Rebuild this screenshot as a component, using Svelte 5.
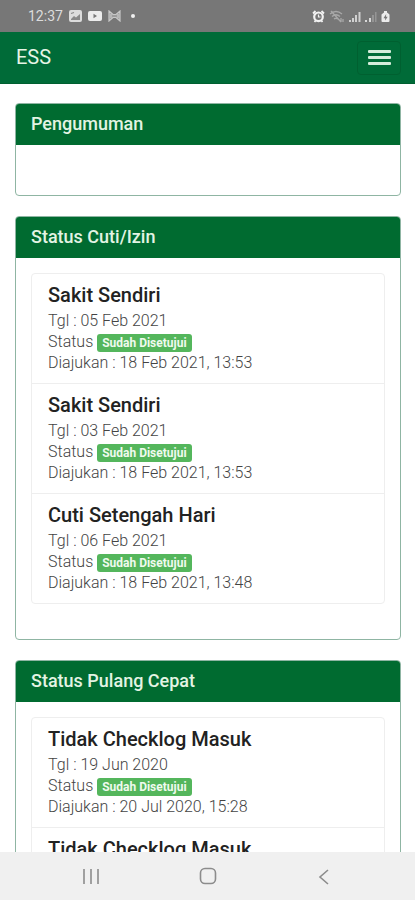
<script lang="ts">
	interface Pengajuan {
		judul: string;
		tgl?: string;
		status?: string;
		diajukan?: string;
	}

	interface Panel {
		judul: string;
		items: Pengajuan[];
	}

	const panels: Panel[] = [
		{ judul: 'Pengumuman', items: [] },
		{
			judul: 'Status Cuti/Izin',
			items: [
				{ judul: 'Sakit Sendiri', tgl: '05 Feb 2021', status: 'Sudah Disetujui', diajukan: '18 Feb 2021, 13:53' },
				{ judul: 'Sakit Sendiri', tgl: '03 Feb 2021', status: 'Sudah Disetujui', diajukan: '18 Feb 2021, 13:53' },
				{ judul: 'Cuti Setengah Hari', tgl: '06 Feb 2021', status: 'Sudah Disetujui', diajukan: '18 Feb 2021, 13:48' }
			]
		},
		{
			judul: 'Status Pulang Cepat',
			items: [
				{ judul: 'Tidak Checklog Masuk', tgl: '19 Jun 2020', status: 'Sudah Disetujui', diajukan: '20 Jul 2020, 15:28' },
				{ judul: 'Tidak Checklog Masuk' }
			]
		}
	];
</script>

<div class="screen">
	<!-- Status bar -->
	<div class="status-bar">
		<div class="status-group">
			<span class="clock">12:37</span>
			<svg width="13" height="12" viewBox="0 0 13 12">
				<rect width="13" height="12" rx="2" fill="#dcdcdc" />
				<path d="M2 9l3-3 2 1.500 4-3.500V10H2z" fill="#888" />
				<path d="M2 3.500l3-1" fill="none" stroke="#888" stroke-width="1.300" />
			</svg>
			<svg width="14" height="12" viewBox="0 0 14 12">
				<rect y="1" width="14" height="10" rx="2" fill="#ececec" />
				<path d="M5.500 3.800v4.400L9 6z" fill="#777" />
			</svg>
			<svg width="13" height="12" viewBox="0 0 13 12" fill="#9c9c9c" stroke="#c8c8c8" stroke-width="1.200">
				<path d="M1 1l4 3.500h3L12 1v10L8 7.500H5L1 11z" />
				<path d="M3 4v4M10 4v4" />
			</svg>
			<span class="dot"></span>
		</div>
		<div class="status-group right">
			<svg width="13" height="13" viewBox="0 0 13 13" fill="none" stroke="#f2f2f2">
				<circle cx="6.500" cy="6.800" r="4.300" stroke-width="2.200" />
				<path d="M6.500 4.500v2.500h2" stroke-width="1.200" />
				<path d="M1 3.500L3.500 1M12 3.500L9.500 1M2.500 12l1.200-1.500M10.500 12l-1.200-1.500" stroke-width="1.800" />
			</svg>
			<svg width="16" height="13" viewBox="0 0 16 13" fill="none" stroke="#a8a8a8" stroke-width="1.300">
				<path d="M1 4q6-5 12 0M3 6.500q4-3.500 8 0M5 9q2-1.500 4 0M2 1l10 11M12 8v4M14 9v3" />
			</svg>
			<svg width="12" height="13" viewBox="0 0 12 13" fill="#d0d0d0">
				<path d="M0 10h2v2H0zM3 8h2v4H3zM6 5h2v7H6zM9.500 2h2v10h-2z" />
			</svg>
			<svg width="12" height="13" viewBox="0 0 12 13">
				<path d="M0 10h2v2H0zM4 8h2v4H4z" fill="#d8d8d8" />
				<path d="M7 5h2v7H7zM10 2h1.500v10H10z" fill="#959595" />
			</svg>
			<svg width="9" height="13" viewBox="0 0 9 13">
				<path d="M3 1h3v1.500l2 1.500a1 1 0 0 1 .500 1V11a1 1 0 0 1-1 1h-6a1 1 0 0 1-1-1V5a1 1 0 0 1 .500-1l2-1.500z" fill="#ececec" />
				<path d="M5.200 4L2.500 8.200h1.700v2.300L6.700 6.700H5z" fill="#777" />
			</svg>
		</div>
	</div>

	<!-- Navbar -->
	<header class="navbar">
		<a class="brand" href="/">ESS</a>
		<button class="toggle" type="button" aria-label="Menu">
			<span class="bar"></span>
			<span class="bar"></span>
			<span class="bar"></span>
		</button>
	</header>

	<main class="content">
		{#each panels as panel}
			<section class="panel">
				<h2 class="panel-heading">{panel.judul}</h2>
				<div class="panel-body">
					{#if panel.items.length}
						<ul class="list">
							{#each panel.items as item}
								<li class="list-item">
									<h3 class="item-title">{item.judul}</h3>
									{#if item.tgl}
										<div>Tgl : {item.tgl}</div>
										<div>Status <span class="label">{item.status}</span></div>
										<div>Diajukan : {item.diajukan}</div>
									{/if}
								</li>
							{/each}
						</ul>
					{/if}
				</div>
			</section>
		{/each}
	</main>

	<!-- Android navigation -->
	<nav class="bottom-nav">
		<button type="button" aria-label="Recent apps">
			<svg width="18" height="18" viewBox="0 0 18 18" fill="none" stroke="#a0a0a0" stroke-width="2">
				<path d="M2 2v15M9 2v15M16 2v15" />
			</svg>
		</button>
		<button type="button" aria-label="Home">
			<svg width="18" height="18" viewBox="0 0 18 18" fill="none" stroke="#8c8c8c" stroke-width="1.600">
				<rect x="1.500" y="1.500" width="15" height="15" rx="4.500" />
			</svg>
		</button>
		<button type="button" aria-label="Back">
			<svg width="18" height="18" viewBox="0 0 18 18" fill="none" stroke="#8c8c8c" stroke-width="1.600">
				<path d="M12 3L4 10l8 7" />
			</svg>
		</button>
	</nav>
</div>

<style>
	:global(body) {
		margin: 0;
		background: #fff;
	}
	.screen {
		display: flex;
		flex-direction: column;
		height: 100vh;
		font-family: Roboto, 'Liberation Sans', sans-serif;
		font-size: 16px;
		font-weight: 300;
		line-height: 21px;
		color: #444;
	}
	.status-bar {
		display: flex;
		flex: none;
		justify-content: space-between;
		align-items: center;
		height: 32px;
		padding: 0 25px 0 28px;
		background: #777;
	}
	.status-group {
		display: flex;
		align-items: center;
		gap: 6px;
	}
	.status-group.right {
		gap: 4px;
	}
	.clock {
		font-size: 14px;
		font-weight: 400;
		color: #dcdcdc;
	}
	.dot {
		width: 4px;
		height: 4px;
		margin-left: 4px;
		border-radius: 50%;
		background: #f0f0f0;
	}
	.navbar {
		display: flex;
		flex: none;
		justify-content: space-between;
		align-items: center;
		box-sizing: border-box;
		height: 52px;
		padding: 0 14px 0 16px;
		border-bottom: 1px solid #005f30;
		background: #006b38;
	}
	.brand {
		font-size: 20px;
		font-weight: 400;
		color: #e6f5e6;
		text-decoration: none;
	}
	.toggle {
		display: flex;
		flex-direction: column;
		justify-content: center;
		align-items: center;
		gap: 3px;
		width: 44px;
		height: 34px;
		padding: 0;
		border: 1px solid #006030;
		border-radius: 4px;
		background: transparent;
	}
	.bar {
		width: 23px;
		height: 3px;
		border-radius: 1px;
		background: #d5eddb;
	}
	.content {
		flex: 1;
		min-height: 0;
		padding: 19px 14px 0 15px;
		overflow-y: auto;
		scrollbar-width: none;
	}
	.panel {
		margin-bottom: 20px;
		border: 1px solid #8fb5a3;
		border-radius: 4px;
	}
	.panel-heading {
		margin: 0;
		padding: 9px 15px 11px;
		border-radius: 3px 3px 0 0;
		background: #006b30;
		color: #e3f4e3;
		font-size: 18px;
		font-weight: 500;
		line-height: 21px;
	}
	.panel-body {
		min-height: 20px;
		padding: 15px;
	}
	.list {
		margin: 0 0 20px;
		padding: 0;
		border: 1px solid #eee;
		border-radius: 4px;
		list-style: none;
	}
	.list-item {
		padding: 10px 16px;
	}
	.list-item + .list-item {
		border-top: 1px solid #eee;
	}
	.item-title {
		margin: 0 0 4px;
		color: #222;
		font-size: 20px;
		font-weight: 500;
		line-height: 22px;
	}
	.label {
		display: inline-block;
		padding: 0 5px;
		border-radius: 3px;
		background: #54b65c;
		color: #effaee;
		font-size: 12px;
		font-weight: 700;
		line-height: 18px;
	}
	.bottom-nav {
		display: flex;
		flex: none;
		justify-content: space-around;
		align-items: center;
		height: 48px;
		padding: 0 32px;
		background: #f0f0f0;
	}
	.bottom-nav button {
		display: flex;
		padding: 0;
		border: 0;
		background: none;
	}
</style>
